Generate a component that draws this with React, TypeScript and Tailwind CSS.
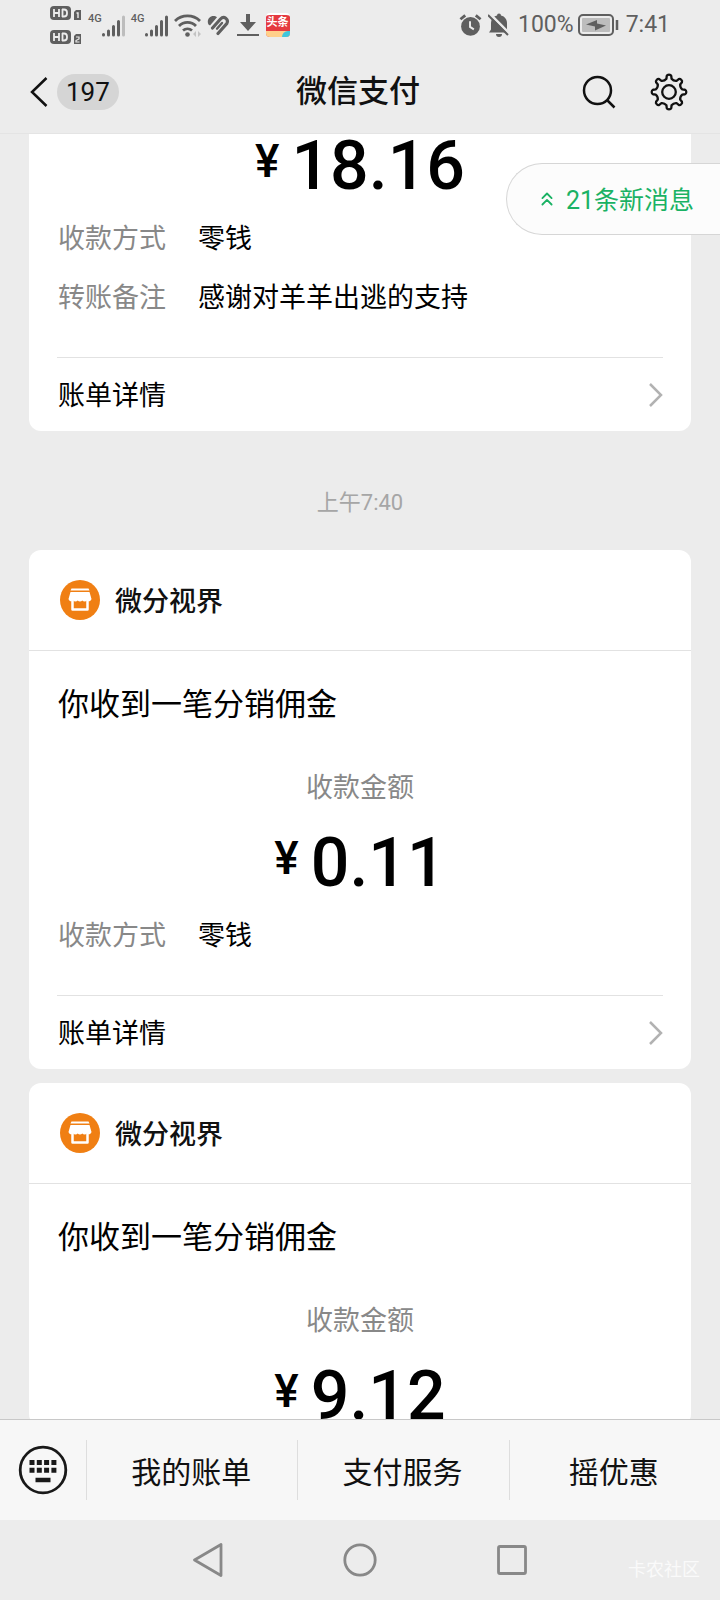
import * as React from 'react';
import { ChevronsUp } from 'lucide-react';

type Bill = { id: number; name: string; title: string; amount: string; method?: string };

const bills: Bill[] = [
  { id: 1, name: '微分视界', title: '你收到一笔分销佣金', amount: '0.11', method: '零钱' },
  { id: 2, name: '微分视界', title: '你收到一笔分销佣金', amount: '9.12' },
];

const menus = ['我的账单', '支付服务', '摇优惠'];

// outline of the eight-toothed settings wheel, centred on 19,19
const gearPath = () => {
  const at = (r: number, deg: number) => {
    const a = ((deg - 90) * Math.PI) / 180;
    return `${(19 + r * Math.cos(a)).toFixed(2)} ${(19 + r * Math.sin(a)).toFixed(2)}`;
  };
  let d = `M${at(13.5, -11)}`;
  for (let t = 0; t < 360; t += 45) {
    d += `L${at(16.2, t - 8)}Q${at(17.4, t - 6)} ${at(17.3, t)}Q${at(17.4, t + 6)} ${at(16.2, t + 8)}`;
    d += `L${at(13.5, t + 11)}Q${at(11.8, t + 22.5)} ${at(13.5, t + 34)}`;
  }
  return d + 'Z';
};

function HdIcon({ sim }: { sim: string }) {
  return (
    <svg width="32" height="14" viewBox="0 0 32 14">
      <rect x="0" y="0" width="21" height="14" rx="4" fill="#5f5f5f" />
      <path d="M4 3v8M9 3v8M4 7h5M12.500 3v8M12 3.500h2a3 3 0 0 1 3 3v1a3 3 0 0 1-3 3h-2" stroke="#ececec" strokeWidth="1.800" fill="none" />
      <path d="M26 4h5v10h-7V6z" fill="#5f5f5f" />
      {sim === '1' ? (
        <path d="M26.500 7h1.500v5" stroke="#ececec" strokeWidth="1.400" fill="none" />
      ) : (
        <path d="M26 7h3v2l-3 1.500v1.500h3.500" stroke="#ececec" strokeWidth="1.200" fill="none" />
      )}
    </svg>
  );
}

function SignalIcon({ weak }: { weak?: boolean }) {
  return (
    <svg width="23" height="24" viewBox="0 0 23 24" stroke="#5f5f5f" strokeWidth="3" strokeLinecap="round">
      <path d="M1.500 21.500v.5M6.500 18v4M11.500 13.500v8.500M16.500 8.500v13.500" />
      <path d="M21.500 4v18" stroke={weak ? '#bdbdbd' : '#5f5f5f'} />
    </svg>
  );
}

function StatusBar() {
  return (
    <div className="flex h-[50px] shrink-0 items-center justify-between pl-[50px] pr-[50px] text-[#5f5f5f]">
      <div className="flex items-center">
        <div className="flex flex-col gap-[10px]">
          <HdIcon sim="1" />
          <HdIcon sim="2" />
        </div>
        <div className="ml-[6px] flex">
          <span className="text-[11px] font-medium leading-3">4G</span>
          <SignalIcon weak />
        </div>
        <div className="ml-[6px] flex">
          <span className="text-[11px] font-medium leading-3">4G</span>
          <SignalIcon />
        </div>
        <svg className="ml-[6px]" width="28" height="24" viewBox="0 0 28 24" fill="none" stroke="#5f5f5f" strokeWidth="2.800">
          <path d="M1 8a18 18 0 0 1 25 0M5 13a12 12 0 0 1 17 0M9 17.500a7 7 0 0 1 9 0" />
          <circle cx="13.500" cy="21.500" r="2.300" fill="#5f5f5f" stroke="none" />
          <path d="M22 18l-3 3 3 3zM24 18l3 3-3 3z" fill="#c4c4c4" stroke="none" />
        </svg>
        <svg className="ml-[5px]" width="23" height="22" viewBox="0 0 23 22" fill="none" stroke="#5f5f5f" strokeLinecap="round">
          <path d="M1.500 10.500C-.5 6.500 2 2 6.500 2c1.500 0 2.500.5 3.500 1.200L3 11.500z" fill="#5f5f5f" stroke="none" />
          <path d="M5.500 14L13.500 5c3.500-3.700 8.500.2 6.300 4.500L11 19.500" strokeWidth="3.200" />
          <path d="M10 14.700l5-5.700" strokeWidth="2.400" />
        </svg>
        <svg className="ml-[6px]" width="24" height="24" viewBox="0 0 24 24" fill="#5f5f5f">
          <path d="M10 1h4v8h6l-8 9-8-9h6zM1 21h22v2H1z" />
        </svg>
        <div className="ml-[6px] flex h-6 w-6 flex-col overflow-hidden rounded-sm border-t-2 border-white bg-[#e5393f]">
          <span className="text-center text-[11px] font-bold leading-4 text-white">头条</span>
          <span className="flex h-2 bg-[#ffd08a]">
            <span className="ml-auto w-2 rounded-tl-full bg-[#3fc6dc]" />
          </span>
        </div>
      </div>
      <div className="flex items-center text-[23px]">
        <svg width="23" height="24" viewBox="0 0 24 24" fill="none" stroke="#5f5f5f">
          <circle cx="12" cy="13.500" r="9.800" fill="#5f5f5f" stroke="none" />
          <path d="M1.500 6l5-4M22.500 6l-5-4" strokeWidth="3" />
          <path d="M11.500 8v6l4 2.500" stroke="#ececec" strokeWidth="2" />
        </svg>
        <svg className="ml-[6px]" width="22" height="24" viewBox="0 0 22 24">
          <path d="M9 2.500a2 2 0 0 1 4 0c4 1 6 4 6 8v6l2 3H1l2-3v-6c0-4 2-7 6-8z" fill="#5f5f5f" />
          <path d="M8 21h6a3 3 0 0 1-6 0z" fill="#5f5f5f" />
          <path d="M2 1l20 20" stroke="#ececec" strokeWidth="2.500" />
          <path d="M0 2l20 20" stroke="#5f5f5f" strokeWidth="2" />
        </svg>
        <span className="ml-2">100%</span>
        <svg className="ml-1" width="42" height="22" viewBox="0 0 42 22">
          <rect x="1" y="1" width="34" height="20" rx="4" fill="none" stroke="#5f5f5f" strokeWidth="2" />
          <rect x="4" y="4" width="28" height="14" rx="1" fill="#bdbdbd" />
          <path d="M8 10.500l11-4.500v3.500l9 2-11 5v-4z" fill="#5f5f5f" />
          <path d="M39 6v10" stroke="#5f5f5f" strokeWidth="2.500" />
        </svg>
        <span className="ml-[6px]">7:41</span>
      </div>
    </div>
  );
}

function TitleBar() {
  return (
    <header className="grid h-[84px] shrink-0 grid-cols-3 items-center border-b border-[#e4e4e4] pl-7 pr-8">
      <button type="button" className="flex items-center gap-2 justify-self-start">
        <svg width="21" height="32" viewBox="0 0 21 32" fill="none" stroke="#111" strokeWidth="2.500">
          <path d="M18.500 2L4 16l14.500 14" />
        </svg>
        <span className="rounded-full bg-[#d5d5d5] px-[9px] text-[26px] leading-9">197</span>
      </button>
      <h1 className="text-center text-[31px] font-medium leading-[44px]">微信支付</h1>
      <div className="flex items-center gap-[34px] justify-self-end">
        <button type="button" aria-label="搜索">
          <svg width="34" height="34" viewBox="0 0 34 34" fill="none" stroke="#111" strokeWidth="2.500">
            <circle cx="15.500" cy="15.500" r="13.500" />
            <path d="M25 25l7.500 7.500" />
          </svg>
        </button>
        <button type="button" aria-label="设置">
          <svg width="38" height="38" viewBox="0 0 38 38" fill="none" stroke="#111" strokeWidth="2.300" strokeLinejoin="round">
            <circle cx="19" cy="19" r="6.800" />
            <path d={gearPath()} />
          </svg>
        </button>
      </div>
    </header>
  );
}

function Amount({ value }: { value: string }) {
  return (
    <p className="flex h-[62px] items-start justify-center gap-3 font-[Roboto,sans-serif] font-medium text-black">
      <span className="text-[46px] leading-[54px]">¥</span>
      <span className="text-[68px] leading-[64px]">{value}</span>
    </p>
  );
}

function Row({ label, value }: { label: string; value: string }) {
  return (
    <div className="flex leading-10">
      <dt className="w-[140px] text-[#888]">{label}</dt>
      <dd className="text-black">{value}</dd>
    </div>
  );
}

function DetailLink() {
  return (
    <a href="#" className="mx-7 mt-[41px] flex h-[74px] items-center justify-between border-t border-[#e2e2e2] pl-px text-black">
      账单详情
      <svg width="15" height="24" viewBox="0 0 15 24" fill="none" stroke="#b2b2b2" strokeWidth="2.500">
        <path d="M2 1l11 11L2 23" />
      </svg>
    </a>
  );
}

function ShopIcon() {
  return (
    <svg width="40" height="40" viewBox="0 0 40 40">
      <circle cx="20" cy="20" r="20" fill="#f07f13" />
      <path d="M11.500 8.500h17l1 2h-19zM10.500 12h19l2 7a2.700 2.700 0 0 1-4.600 1.500 3 3 0 0 1-4.600 0 3 3 0 0 1-4.600 0 3 3 0 0 1-4.600 0A2.700 2.700 0 0 1 8.500 19z" fill="#fff" />
      <path d="M12.500 20v9.500h15V20" stroke="#fff" strokeWidth="2.500" strokeLinejoin="round" fill="none" />
    </svg>
  );
}

function BillCard({ bill }: { bill: Bill }) {
  return (
    <article className="rounded-xl bg-white">
      <div className="flex h-[101px] items-center gap-[15px] border-b border-[#e2e2e2] px-[31px]">
        <ShopIcon />
        <h2 className="font-medium">{bill.name}</h2>
      </div>
      <div className="px-[29px] pt-[29px]">
        <p className="text-[31px] leading-[44px] text-black">{bill.title}</p>
        <p className="mt-[42px] text-center leading-10 text-[#888]">收款金额</p>
        <div className="mt-[25px]">
          <Amount value={bill.amount} />
        </div>
        {bill.method && (
          <dl className="mt-[21px]">
            <Row label="收款方式" value={bill.method} />
          </dl>
        )}
      </div>
      {bill.method && <DetailLink />}
    </article>
  );
}

function App() {
  return (
    <div className="flex h-screen flex-col bg-[#ececec] font-[Roboto,'Noto_Sans_CJK_SC',sans-serif] text-[#111]">
      <StatusBar />
      <TitleBar />

      <main className="relative min-h-0 flex-1 overflow-hidden px-[29px] font-['Noto_Sans_CJK_SC',sans-serif] text-[27px]">
        <article className="rounded-b-xl bg-white">
          <div className="px-[29px]">
            <Amount value="18.16" />
            <dl className="mt-[21px] flex flex-col gap-[19px]">
              <Row label="收款方式" value="零钱" />
              <Row label="转账备注" value="感谢对羊羊出逃的支持" />
            </dl>
          </div>
          <DetailLink />
        </article>

        <p className="pb-8 pt-14 text-center font-[Roboto,'Noto_Sans_CJK_SC',sans-serif] text-[22px] leading-[31px] text-[#a6a6a6]">
          上午7:40
        </p>

        <div className="flex flex-col gap-[14px]">
          {bills.map((bill) => (
            <BillCard key={bill.id} bill={bill} />
          ))}
        </div>

        <button
          type="button"
          className="absolute right-0 top-[29px] flex h-[72px] items-center gap-2 rounded-l-full border border-r-0 border-[#d6d6d6] bg-[#fcfcfc] pl-[29px] pr-[26px] font-[Roboto,'Noto_Sans_CJK_SC',sans-serif] text-[25px] text-[#1ab264]"
        >
          <ChevronsUp size={22} strokeWidth={2} />
          <span className="pt-1">21条新消息</span>
        </button>
      </main>

      <nav className="flex h-[101px] shrink-0 items-center border-t border-[#c8c8c8] bg-[#f7f7f7] font-['Noto_Sans_CJK_SC',sans-serif]">
        <button type="button" aria-label="键盘" className="flex w-[86px] justify-center">
          <svg width="50" height="50" viewBox="0 0 50 50">
            <circle cx="25" cy="25" r="22.800" fill="none" stroke="#191919" strokeWidth="2.800" />
            <path d="M11.500 17.500h27M11.500 25.200h27" stroke="#191919" strokeWidth="5" strokeDasharray="5 2.300" />
            <path d="M17.500 35h15" stroke="#191919" strokeWidth="4.500" />
          </svg>
        </button>
        {menus.map((menu) => (
          <button key={menu} type="button" className="h-[60px] flex-1 border-l border-[#dedede] pr-[2px] text-[30px]">
            {menu}
          </button>
        ))}
      </nav>

      <footer className="relative flex h-20 shrink-0 items-center justify-center gap-[120px]">
        <button type="button" aria-label="返回">
          <svg width="30" height="36" viewBox="0 0 30 36" fill="none" stroke="#888" strokeWidth="2.800" strokeLinejoin="round">
            <path d="M28 2.500v31L1.500 18z" />
          </svg>
        </button>
        <button type="button" aria-label="主页">
          <svg width="34" height="34" viewBox="0 0 34 34" fill="none" stroke="#888" strokeWidth="2.800">
            <circle cx="17" cy="17" r="15.200" />
          </svg>
        </button>
        <button type="button" aria-label="最近任务">
          <svg width="30" height="30" viewBox="0 0 30 30" fill="none" stroke="#888" strokeWidth="2.800">
            <rect x="1.500" y="1.500" width="27" height="27" rx="1.500" />
          </svg>
        </button>
        <span className="absolute bottom-4 right-5 text-[18px] leading-7 text-[#fafafa]">卡农社区</span>
      </footer>
    </div>
  );
}

export default App;
